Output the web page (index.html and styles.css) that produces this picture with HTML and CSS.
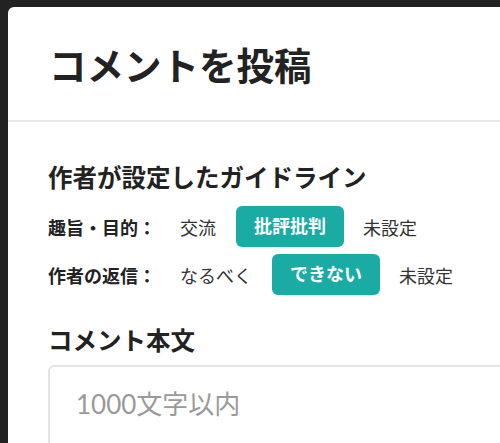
FILE: index.html
```html
<!DOCTYPE html>
<html lang="ja">
<head>
    <meta charset="UTF-8">
    <meta name="viewport" content="width=device-width, initial-scale=1.0">
    <title>コメントを投稿</title>
    <link rel="stylesheet" href="styles.css">
</head>
<body>
    <div class="overlay">
        <div class="modal">
            <div class="modal-header">
                <h1>コメントを投稿</h1>
            </div>
            <div class="modal-body">
                <h2>作者が設定したガイドライン</h2>
                <div class="guide-row">
                    <span class="guide-label">趣旨・目的：</span>
                    <span class="guide-option">交流</span>
                    <span class="guide-option selected">批評批判</span>
                    <span class="guide-option">未設定</span>
                </div>
                <div class="guide-row">
                    <span class="guide-label">作者の返信：</span>
                    <span class="guide-option">なるべく</span>
                    <span class="guide-option selected">できない</span>
                    <span class="guide-option">未設定</span>
                </div>
                <h2 class="comment-title">コメント本文</h2>
                <textarea class="comment-input" placeholder="1000文字以内"></textarea>
            </div>
        </div>
    </div>
</body>
</html>
```

FILE: styles.css
```css
body {
    margin: 0;
    background-color: #222222;
    font-family: Lato, "Noto Sans CJK JP", sans-serif;
    color: #333333;
    overflow: hidden;
    height: 443px;
}
.overlay {
    padding: 7px 0 0 8px;
}
.modal {
    background-color: #ffffff;
    border-radius: 6px 6px 0 0;
    width: 580px;
    height: 500px;
}
.modal-header {
    height: 113px;
    display: flex;
    align-items: center;
    padding: 0 41px;
    border-bottom: 2px solid #e8e8e8;
}
h1 {
    margin: 0;
    font-size: 37.5px;
    font-weight: bold;
    color: #222222;
}
.modal-body {
    padding: 39px 40px 0 40px;
}
h2 {
    margin: 0;
    font-size: 24.5px;
    line-height: 34px;
    font-weight: bold;
    color: #222222;
}
.guide-row {
    display: flex;
    align-items: center;
    height: 41px;
    font-size: 18px;
}
.guide-row + .guide-row {
    margin-top: 7px;
}
h2 + .guide-row {
    margin-top: 11px;
}
.guide-label {
    width: 132px;
    font-weight: bold;
    color: #222222;
}
.guide-option {
    margin-right: 20px;
}
.guide-option.selected {
    background-color: #19aba4;
    color: #ffffff;
    font-weight: bold;
    padding: 0 18px;
    height: 41px;
    line-height: 41px;
    border-radius: 6px;
    margin-right: 19px;
}
.comment-title {
    margin-top: 29px;
}
.comment-input {
    display: block;
    margin-top: 7px;
    width: 100%;
    height: 120px;
    box-sizing: border-box;
    padding: 18px 26px;
    border: 2px solid #e3e3e3;
    border-radius: 6px;
    font-family: Lato, "Noto Sans CJK JP", sans-serif;
    font-size: 26px;
    line-height: 1.5;
    resize: none;
}
.comment-input::placeholder {
    color: #9a9a9a;
}
```
